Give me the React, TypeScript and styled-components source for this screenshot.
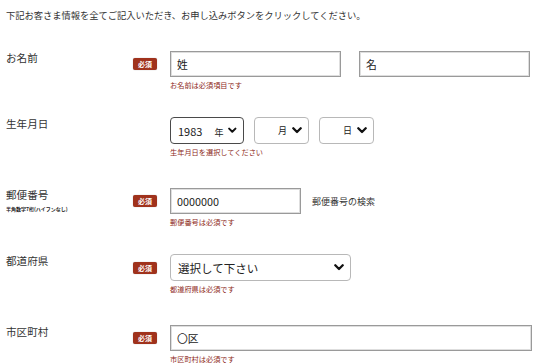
import React from 'react';
import styled, { createGlobalStyle } from 'styled-components';

const GlobalStyle = createGlobalStyle`
  html, body {
    margin: 0;
    padding: 0;
    background: #fff;
  }
  body {
    font-family: 'Noto Sans CJK JP', 'Noto Sans', sans-serif;
    color: #333;
  }
`;

const Page = styled.div`
  width: 540px;
  height: 363px;
  overflow: hidden;
  padding: 9px 0 0 6px;
  box-sizing: border-box;
`;

const Intro = styled.p`
  margin: 0 0 29px;
  font-size: 9.3px;
  line-height: 13px;
  color: #333;
  letter-spacing: -0.05px;
`;

const Row = styled.div<{ $after: number }>`
  display: grid;
  grid-template-columns: 127px 37px 1fr;
  align-items: start;
  margin-bottom: ${(p) => p.$after}px;
`;

const LabelCell = styled.div`
  display: flex;
  flex-direction: column;
`;

const Label = styled.div`
  font-size: 10.6px;
  line-height: 13px;
  color: #333;
`;

const SubLabel = styled.div`
  font-size: 5px;
  line-height: 6px;
  margin-top: 5px;
  color: #222;
  font-weight: 700;
  white-space: nowrap;
`;

const BadgeCell = styled.div<{ $h: number }>`
  height: ${(p) => p.$h}px;
  display: flex;
  align-items: center;
`;

const Badge = styled.span`
  display: inline-flex;
  align-items: center;
  justify-content: center;
  width: 24px;
  height: 12px;
  border-radius: 2px;
  background: #a0321c;
  color: #fff;
  font-size: 7px;
  font-weight: 700;
  box-shadow: 0 0 1px rgba(0, 0, 0, 0.4);
`;

const FieldCell = styled.div`
  display: flex;
  flex-direction: column;
`;

const Fields = styled.div<{ $gap: number }>`
  display: flex;
  align-items: center;
  gap: ${(p) => p.$gap}px;
`;

const TextBox = styled.div<{ $w: number }>`
  width: ${(p) => p.$w}px;
  height: 26px;
  box-sizing: border-box;
  border: 1px solid #9a9a9a;
  box-shadow: inset 0 0 0 1px #dedede;
  display: flex;
  align-items: center;
  padding-left: 6px;
  font-size: 10.8px;
  color: #222;
  background: #fff;
`;

const SelectBox = styled.div<{ $w: number; $focus?: boolean; $align?: string }>`
  width: ${(p) => p.$w}px;
  height: 27px;
  box-sizing: border-box;
  border: 1px solid ${(p) => (p.$focus ? '#4a4a4a' : '#b8b8b8')};
  border-radius: 4px;
  display: flex;
  align-items: center;
  justify-content: ${(p) => p.$align ?? 'flex-start'};
  padding: 0 6px 0 7px;
  color: #222;
  background: #fff;
  gap: 5px;
`;

const SelectValue = styled.span<{ $size: number }>`
  font-size: ${(p) => p.$size}px;
  flex: 1;
  white-space: nowrap;
`;

const Unit = styled.span`
  font-size: 9px;
`;

const Year = styled.span`
  font-size: 11px;
  margin-right: 12px;
`;

const ErrorText = styled.div`
  margin-top: 4px;
  font-size: 7.2px;
  line-height: 9px;
  color: #8e2a1a;
  white-space: nowrap;
`;

const SearchLink = styled.span`
  font-size: 9px;
  color: #333;
`;

const Chevron = () => (
  <svg width="10" height="7" viewBox="0 0 10 7">
    <path d="M1.3 1.3 L5 5 L8.7 1.3" fill="none" stroke="#111" strokeWidth="2.3" strokeLinecap="round" strokeLinejoin="round" />
  </svg>
);

export default function App() {
  return (
    <>
      <GlobalStyle />
      <Page>
        <Intro>下記お客さま情報を全てご記入いただき、お申し込みボタンをクリックしてください。</Intro>

        <Row $after={27}>
          <LabelCell>
            <Label>お名前</Label>
          </LabelCell>
          <BadgeCell $h={26}>
            <Badge>必須</Badge>
          </BadgeCell>
          <FieldCell>
            <Fields $gap={18}>
              <TextBox $w={171}>姓</TextBox>
              <TextBox $w={171}>名</TextBox>
            </Fields>
            <ErrorText>お名前は必須項目です</ErrorText>
          </FieldCell>
        </Row>

        <Row $after={31}>
          <LabelCell>
            <Label>生年月日</Label>
          </LabelCell>
          <BadgeCell $h={27} />
          <FieldCell>
            <Fields $gap={10}>
              <SelectBox $w={74} $focus>
                <SelectValue $size={11}>
                  <Year>1983</Year>
                  <Unit>年</Unit>
                </SelectValue>
                <Chevron />
              </SelectBox>
              <SelectBox $w={55} $align="flex-end">
                <Unit>月</Unit>
                <Chevron />
              </SelectBox>
              <SelectBox $w={55} $align="flex-end">
                <Unit>日</Unit>
                <Chevron />
              </SelectBox>
            </Fields>
            <ErrorText>生年月日を選択してください</ErrorText>
          </FieldCell>
        </Row>

        <Row $after={27}>
          <LabelCell>
            <Label>郵便番号</Label>
            <SubLabel>半角数字7桁(ハイフンなし)</SubLabel>
          </LabelCell>
          <BadgeCell $h={26}>
            <Badge>必須</Badge>
          </BadgeCell>
          <FieldCell>
            <Fields $gap={11}>
              <TextBox $w={131}>0000000</TextBox>
              <SearchLink>郵便番号の検索</SearchLink>
            </Fields>
            <ErrorText>郵便番号は必須です</ErrorText>
          </FieldCell>
        </Row>

        <Row $after={31}>
          <LabelCell>
            <Label>都道府県</Label>
          </LabelCell>
          <BadgeCell $h={27}>
            <Badge>必須</Badge>
          </BadgeCell>
          <FieldCell>
            <Fields $gap={10}>
              <SelectBox $w={181}>
                <SelectValue $size={11.5}>選択して下さい</SelectValue>
                <Chevron />
              </SelectBox>
            </Fields>
            <ErrorText>都道府県は必須です</ErrorText>
          </FieldCell>
        </Row>

        <Row $after={0}>
          <LabelCell>
            <Label>市区町村</Label>
          </LabelCell>
          <BadgeCell $h={26}>
            <Badge>必須</Badge>
          </BadgeCell>
          <FieldCell>
            <Fields $gap={10}>
              <TextBox $w={362}>〇区</TextBox>
            </Fields>
            <ErrorText>市区町村は必須です</ErrorText>
          </FieldCell>
        </Row>
      </Page>
    </>
  );
}
